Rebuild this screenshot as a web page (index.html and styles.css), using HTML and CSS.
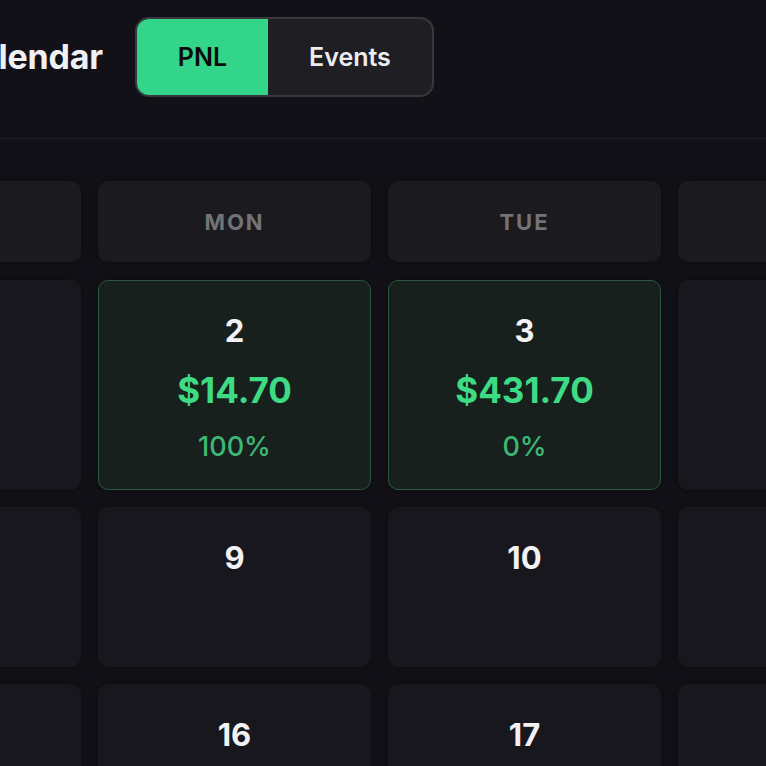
FILE: index.html
```html
<!DOCTYPE html>
<html lang="en">
<head>
<meta charset="utf-8">
<title>Calendar</title>
<link rel="stylesheet" href="styles.css">
</head>
<body>
<div class="page">
  <header class="topbar">
    <h1 class="title">Calendar</h1>
    <div class="toggle">
      <button class="seg seg-active">PNL</button>
      <button class="seg">Events</button>
    </div>
  </header>
  <main class="grid">
    <div class="dow">SUN</div>
    <div class="dow">MON</div>
    <div class="dow">TUE</div>
    <div class="dow">WED</div>
    <div class="dow">THU</div>
    <div class="dow">FRI</div>
    <div class="dow">SAT</div>

    <div class="day day-tall"><span class="num">1</span></div>
    <div class="day day-tall day-win"><span class="num">2</span><span class="pnl">$14.70</span><span class="pct">100%</span></div>
    <div class="day day-tall day-win"><span class="num">3</span><span class="pnl">$431.70</span><span class="pct">0%</span></div>
    <div class="day day-tall"><span class="num">4</span></div>
    <div class="day day-tall"><span class="num">5</span></div>
    <div class="day day-tall"><span class="num">6</span></div>
    <div class="day day-tall"><span class="num">7</span></div>

    <div class="day"><span class="num">8</span></div>
    <div class="day"><span class="num">9</span></div>
    <div class="day"><span class="num">10</span></div>
    <div class="day"><span class="num">11</span></div>
    <div class="day"><span class="num">12</span></div>
    <div class="day"><span class="num">13</span></div>
    <div class="day"><span class="num">14</span></div>

    <div class="day"><span class="num">15</span></div>
    <div class="day"><span class="num">16</span></div>
    <div class="day"><span class="num">17</span></div>
    <div class="day"><span class="num">18</span></div>
    <div class="day"><span class="num">19</span></div>
    <div class="day"><span class="num">20</span></div>
    <div class="day"><span class="num">21</span></div>
  </main>
</div>
</body>
</html>
```

FILE: styles.css
```css
html, body {
  margin: 0;
  padding: 0;
  background: #121117;
  overflow: hidden;
  height: 100%;
}
body {
  font-family: Inter, "Noto Sans", sans-serif;
  color: #f1f1f3;
}
.page {
  width: 766px;
  height: 766px;
  overflow: hidden;
}
.topbar {
  display: flex;
  align-items: center;
  gap: 32px;
  margin-left: -46px;
  padding: 17px 0 41px;
  border-bottom: 1px solid #1d1d23;
  width: 900px;
}
.title {
  margin: 0;
  font-size: 34px;
  font-weight: 700;
  line-height: 40px;
  color: #f0f0f3;
  white-space: nowrap;
  letter-spacing: -0.2px;
}
.toggle {
  display: flex;
  width: 299px;
  height: 80px;
  box-sizing: border-box;
  border: 2px solid #37373d;
  border-radius: 14px;
  overflow: hidden;
  background: #1e1e23;
}
.seg {
  border: 0;
  margin: 0;
  padding: 0;
  font-family: inherit;
  font-size: 25px;
  font-weight: 600;
  color: #ececef;
  background: transparent;
  flex: 1 1 0;
}
.seg-active {
  flex: 0 0 131px;
  background: #32d58a;
  color: #0b0b0d;
}
.grid {
  display: grid;
  grid-template-columns: repeat(7, 273px);
  grid-template-rows: 82px 210px 160px 160px;
  column-gap: 17px;
  row-gap: 17px;
  margin-top: 42px;
  margin-left: -192px;
}
.dow {
  display: flex;
  align-items: center;
  justify-content: center;
  background: #1a1a1f;
  border-radius: 10px;
  font-size: 22px;
  font-weight: 700;
  letter-spacing: 2px;
  color: #737378;
  box-shadow: 0 0 10px rgba(0,0,0,0.35);
  margin-bottom: 1px;
}
.day {
  display: flex;
  flex-direction: column;
  align-items: center;
  gap: 21px;
  box-sizing: border-box;
  padding-top: 32px;
  background: #18171e;
  border: 1px solid #18171e;
  border-radius: 10px;
  box-shadow: 0 0 10px rgba(0,0,0,0.35);
}
.day-tall {
  padding-top: 32px;
}
.day-win {
  background: #17201d;
  border-color: #2d5741;
}
.num {
  font-size: 31px;
  line-height: 36px;
  font-weight: 700;
  color: #f2f2f4;
}
.pnl {
  font-size: 35px;
  line-height: 40px;
  font-weight: 700;
  color: #3ddb84;
}
.pct {
  font-size: 27px;
  line-height: 32px;
  font-weight: 500;
  color: #3db874;
}
```
